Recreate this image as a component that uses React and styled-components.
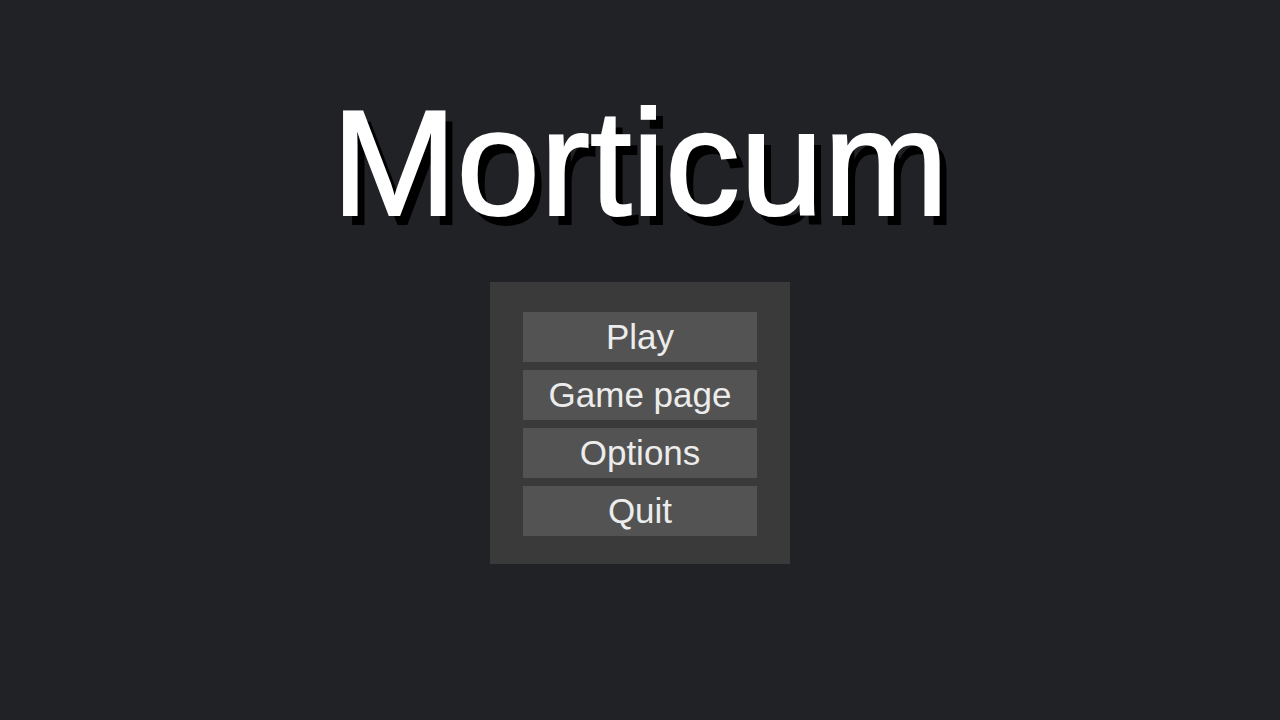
import React from 'react'
import styled, { createGlobalStyle } from 'styled-components'

const menuItems = ['Play', 'Game page', 'Options', 'Quit']

const App = () => {
	return (
		<>
			<GlobalStyle />
			<Screen>
				<Title>Morticum</Title>
				<Menu>
					{menuItems.map((item) => (
						<MenuButton key={item} type="button">
							{item}
						</MenuButton>
					))}
				</Menu>
			</Screen>
		</>
	)
}

const GlobalStyle = createGlobalStyle`
	* {
		box-sizing: border-box;
	}

	body {
		margin: 0;
		background-color: #212226;
		font-family: 'Liberation Sans', Arial, sans-serif;
	}
`

const Screen = styled.main`
	min-height: 100vh;
	display: flex;
	flex-direction: column;
	align-items: center;
	padding: 83px 20px;
`

const Title = styled.h1`
	margin: 0 0 39px;
	font-size: 150px;
	font-weight: 400;
	line-height: 160px;
	color: #fff;
	-webkit-text-stroke: 2px #fff;
	text-shadow: 8px 10px 0 #000;
`

const Menu = styled.nav`
	width: 300px;
	display: flex;
	flex-direction: column;
	gap: 8px;
	padding: 30px 33px 28px;
	background-color: #3a3a3a;
`

const MenuButton = styled.button`
	height: 50px;
	padding: 0;
	border: none;
	background-color: #535353;
	color: #ececec;
	font-family: inherit;
	font-size: 35px;
	line-height: 50px;
	cursor: pointer;

	&:hover {
		background-color: #606060;
	}
`

export default App
